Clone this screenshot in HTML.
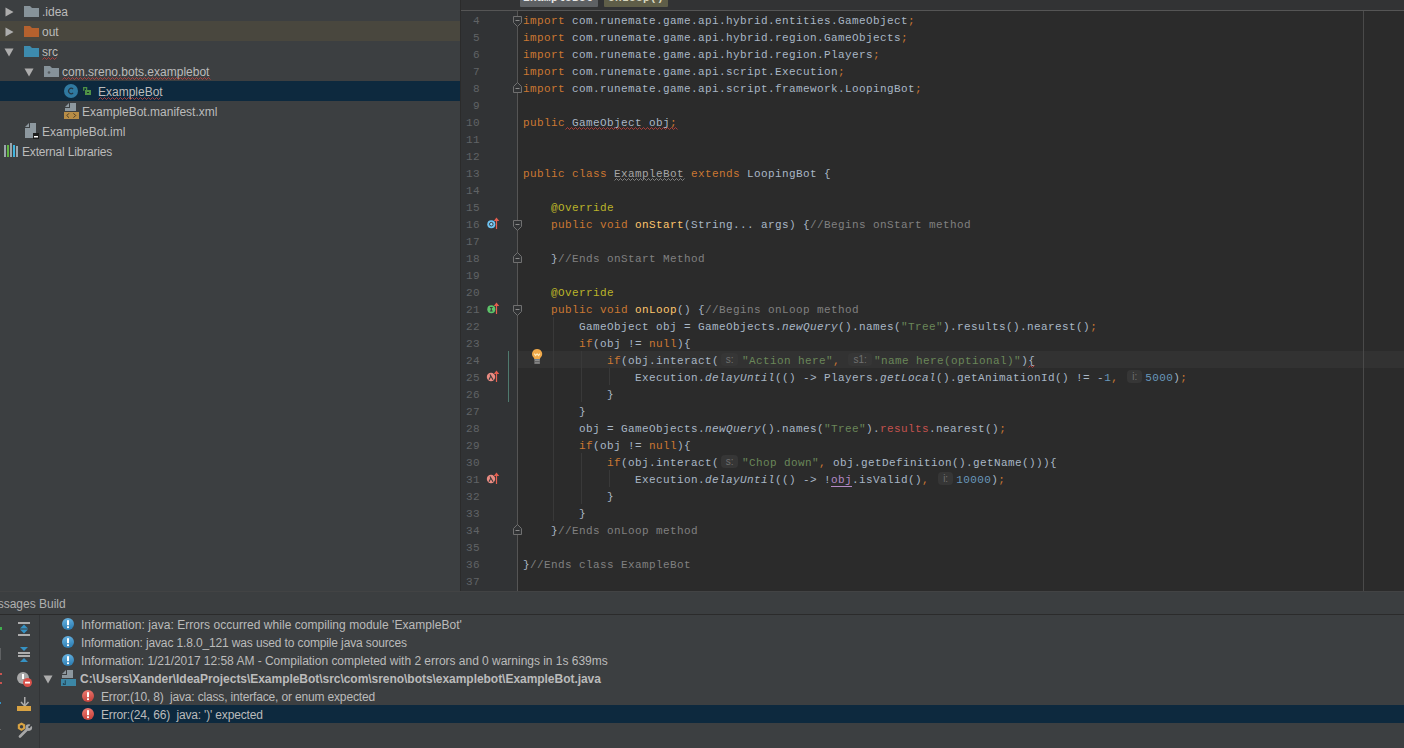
<!DOCTYPE html><html><head><meta charset="utf-8"><style>
*{margin:0;padding:0;box-sizing:border-box}
html,body{width:1404px;height:748px;overflow:hidden;background:#3C3F41;position:relative}
.abs{position:absolute}
#proj{left:0;top:0;width:460px;height:591px;background:#3C3F41}
#vsep{left:460px;top:0;width:1px;height:591px;background:#2B2B2B}
#crumb{left:461px;top:0;width:943px;height:10px;background:#323334}
#crumbline{left:461px;top:10px;width:943px;height:1px;background:#555555}
#gutter{left:461px;top:11px;width:56px;height:580px;background:#313335}
#gutline{left:517px;top:11px;width:1px;height:580px;background:#555555}
#code{left:518px;top:11px;width:886px;height:580px;background:#2B2B2B}
#margin{left:1363px;top:11px;width:1px;height:580px;background:#4A4A4A}
.tree{font-family:"Liberation Sans",sans-serif;font-size:12px;color:#BBBBBB;white-space:pre}
.row{position:absolute;left:0;width:460px;height:20px}
.ln{position:absolute;left:460px;width:20px;text-align:right;font-family:"Liberation Mono",monospace;font-size:11px;letter-spacing:0.4px;padding-top:2px;color:#606366;height:17px;line-height:17px;white-space:pre}
.cl{position:absolute;left:523px;height:17px;line-height:17px;font-family:"Liberation Mono",monospace;font-size:11px;letter-spacing:0.4px;color:#A9B7C6;padding-top:2px;white-space:pre}
.k{color:#CC7832}.s{color:#6A8759}.n{color:#6897BB}.a{color:#BBB529}.c{color:#808080}.f{color:#FFC66D}.i{font-style:italic}
.r{color:#C5524E}.u{color:#A6A6A6}.p{color:#B389C5;border-bottom:1px solid #B389C5}
.hint{display:inline-block;position:relative;vertical-align:top;height:17px}
.hb{position:absolute;top:0px;height:13px;background:#363636;border-radius:4px;font-family:"Liberation Sans",sans-serif;font-size:10px;line-height:13px;color:#707070;text-align:center;letter-spacing:0}
.msg{font-family:"Liberation Sans",sans-serif;font-size:12px;color:#BBBBBB;white-space:pre;position:absolute;height:18px;line-height:18px}

.tt{position:absolute;font-family:"Liberation Sans",sans-serif;font-size:12px;color:#BBBBBB;white-space:pre;height:20px;line-height:20px;padding-top:1px}

.mt{position:absolute;font-family:"Liberation Sans",sans-serif;font-size:12px;color:#BBBBBB;white-space:pre;height:18px;line-height:18px;padding-top:1px}
</style></head><body><div id="proj" class="abs"></div><div id="vsep" class="abs"></div><div id="crumb" class="abs"></div><div id="crumbline" class="abs"></div><div id="gutter" class="abs"></div><div id="gutline" class="abs"></div><div id="code" class="abs"></div><div id="margin" class="abs"></div><div class="abs" style="left:518px;top:351px;width:886px;height:17px;background:#323232"></div><div id="margin2" class="abs" style="left:1363px;top:351px;width:1px;height:17px;background:#4A4A4A"></div><div class="ln" style="top:11px">4</div><div class="ln" style="top:28px">5</div><div class="ln" style="top:45px">6</div><div class="ln" style="top:62px">7</div><div class="ln" style="top:79px">8</div><div class="ln" style="top:96px">9</div><div class="ln" style="top:113px">10</div><div class="ln" style="top:130px">11</div><div class="ln" style="top:147px">12</div><div class="ln" style="top:164px">13</div><div class="ln" style="top:181px">14</div><div class="ln" style="top:198px">15</div><div class="ln" style="top:215px">16</div><div class="ln" style="top:232px">17</div><div class="ln" style="top:249px">18</div><div class="ln" style="top:266px">19</div><div class="ln" style="top:283px">20</div><div class="ln" style="top:300px">21</div><div class="ln" style="top:317px">22</div><div class="ln" style="top:334px">23</div><div class="ln" style="top:351px">24</div><div class="ln" style="top:368px">25</div><div class="ln" style="top:385px">26</div><div class="ln" style="top:402px">27</div><div class="ln" style="top:419px">28</div><div class="ln" style="top:436px">29</div><div class="ln" style="top:453px">30</div><div class="ln" style="top:470px">31</div><div class="ln" style="top:487px">32</div><div class="ln" style="top:504px">33</div><div class="ln" style="top:521px">34</div><div class="ln" style="top:538px">35</div><div class="ln" style="top:555px">36</div><div class="ln" style="top:572px">37</div><div class="cl" style="top:11px"><span class="k">import</span> com.runemate.game.api.hybrid.entities.GameObject<span class="k">;</span></div><div class="cl" style="top:28px"><span class="k">import</span> com.runemate.game.api.hybrid.region.GameObjects<span class="k">;</span></div><div class="cl" style="top:45px"><span class="k">import</span> com.runemate.game.api.hybrid.region.Players<span class="k">;</span></div><div class="cl" style="top:62px"><span class="k">import</span> com.runemate.game.api.script.Execution<span class="k">;</span></div><div class="cl" style="top:79px"><span class="k">import</span> com.runemate.game.api.script.framework.LoopingBot<span class="k">;</span></div><div class="cl" style="top:113px"><span class="k">public</span> GameObject obj<span class="k">;</span></div><div class="cl" style="top:164px"><span class="k">public class </span><span class="u">ExampleBot</span> <span class="k">extends </span>LoopingBot {</div><div class="cl" style="top:198px">    <span class="a">@Override</span></div><div class="cl" style="top:215px">    <span class="k">public void </span><span class="f">onStart</span>(String... args) {<span class="c">//Begins onStart method</span></div><div class="cl" style="top:249px">    }<span class="c">//Ends onStart Method</span></div><div class="cl" style="top:283px">    <span class="a">@Override</span></div><div class="cl" style="top:300px">    <span class="k">public void </span><span class="f">onLoop</span>() {<span class="c">//Begins onLoop method</span></div><div class="cl" style="top:317px">        GameObject obj = GameObjects.<span class="i">newQuery</span>().names(<span class="s">&quot;Tree&quot;</span>).results().nearest()<span class="k">;</span></div><div class="cl" style="top:334px">        <span class="k">if</span>(obj != <span class="k">null</span>){</div><div class="cl" style="top:351px">            <span class="k">if</span>(obj.interact(<span class="hint" style="width:23px"><span class="hb" style="left:2px;width:17px">s:</span></span><span class="s">&quot;Action here&quot;</span><span class="k">,</span> <span class="hint" style="width:27px"><span class="hb" style="left:1px;width:24px">s1:</span></span><span class="s">&quot;name here(optional)&quot;</span>){</div><div class="cl" style="top:368px">                Execution.<span class="i">delayUntil</span>(() -&gt; Players.<span class="i">getLocal</span>().getAnimationId() != -<span class="n">1</span><span class="k">,</span> <span class="hint" style="width:20px"><span class="hb" style="left:2px;width:15px">i:</span></span><span class="n">5000</span>)<span class="k">;</span></div><div class="cl" style="top:385px">            }</div><div class="cl" style="top:402px">        }</div><div class="cl" style="top:419px">        obj = GameObjects.<span class="i">newQuery</span>().names(<span class="s">&quot;Tree&quot;</span>).<span class="r">results</span>.nearest()<span class="k">;</span></div><div class="cl" style="top:436px">        <span class="k">if</span>(obj != <span class="k">null</span>){</div><div class="cl" style="top:453px">            <span class="k">if</span>(obj.interact(<span class="hint" style="width:23px"><span class="hb" style="left:2px;width:17px">s:</span></span><span class="s">&quot;Chop down&quot;</span><span class="k">,</span> obj.getDefinition().getName())){</div><div class="cl" style="top:470px">                Execution.<span class="i">delayUntil</span>(() -&gt; !<span class="p">obj</span>.isValid()<span class="k">,</span> <span class="hint" style="width:20px"><span class="hb" style="left:2px;width:15px">i:</span></span><span class="n">10000</span>)<span class="k">;</span></div><div class="cl" style="top:487px">            }</div><div class="cl" style="top:504px">        }</div><div class="cl" style="top:521px">    }<span class="c">//Ends onLoop method</span></div><div class="cl" style="top:555px">}<span class="c">//Ends class ExampleBot</span></div><svg class="abs" style="left:565px;top:127px" width="113" height="4"><polyline points="0.5,2.5 2.5,0.5 4.5,2.5 6.5,0.5 8.5,2.5 10.5,0.5 12.5,2.5 14.5,0.5 16.5,2.5 18.5,0.5 20.5,2.5 22.5,0.5 24.5,2.5 26.5,0.5 28.5,2.5 30.5,0.5 32.5,2.5 34.5,0.5 36.5,2.5 38.5,0.5 40.5,2.5 42.5,0.5 44.5,2.5 46.5,0.5 48.5,2.5 50.5,0.5 52.5,2.5 54.5,0.5 56.5,2.5 58.5,0.5 60.5,2.5 62.5,0.5 64.5,2.5 66.5,0.5 68.5,2.5 70.5,0.5 72.5,2.5 74.5,0.5 76.5,2.5 78.5,0.5 80.5,2.5 82.5,0.5 84.5,2.5 86.5,0.5 88.5,2.5 90.5,0.5 92.5,2.5 94.5,0.5 96.5,2.5 98.5,0.5 100.5,2.5 102.5,0.5 104.5,2.5 106.5,0.5 108.5,2.5 110.5,0.5 112.5,2.5" fill="none" stroke="#BC3F3C" stroke-width="0.9"/></svg><svg class="abs" style="left:614px;top:178px" width="71" height="4"><polyline points="0.5,2.5 2.5,0.5 4.5,2.5 6.5,0.5 8.5,2.5 10.5,0.5 12.5,2.5 14.5,0.5 16.5,2.5 18.5,0.5 20.5,2.5 22.5,0.5 24.5,2.5 26.5,0.5 28.5,2.5 30.5,0.5 32.5,2.5 34.5,0.5 36.5,2.5 38.5,0.5 40.5,2.5 42.5,0.5 44.5,2.5 46.5,0.5 48.5,2.5 50.5,0.5 52.5,2.5 54.5,0.5 56.5,2.5 58.5,0.5 60.5,2.5 62.5,0.5 64.5,2.5 66.5,0.5 68.5,2.5 70.5,0.5" fill="none" stroke="#8A8A8A" stroke-width="0.9"/></svg><svg class="abs" style="left:1028px;top:365px" width="8" height="4"><polyline points="0.5,2.5 2.5,0.5 4.5,2.5 6.5,0.5" fill="none" stroke="#BC3F3C" stroke-width="0.9"/></svg><svg class="abs" style="left:512px;top:16px" width="11" height="12"><path d="M1.5 0.5 H9.5 V6.5 L5.5 10.5 L1.5 6.5Z" fill="#313335" stroke="#707070" stroke-width="1"/><rect x="3.5" y="4" width="4" height="1" fill="#8A8A8A"/></svg><svg class="abs" style="left:512px;top:220px" width="11" height="12"><path d="M1.5 0.5 H9.5 V6.5 L5.5 10.5 L1.5 6.5Z" fill="#313335" stroke="#707070" stroke-width="1"/><rect x="3.5" y="4" width="4" height="1" fill="#8A8A8A"/></svg><svg class="abs" style="left:512px;top:305px" width="11" height="12"><path d="M1.5 0.5 H9.5 V6.5 L5.5 10.5 L1.5 6.5Z" fill="#313335" stroke="#707070" stroke-width="1"/><rect x="3.5" y="4" width="4" height="1" fill="#8A8A8A"/></svg><svg class="abs" style="left:512px;top:82px" width="11" height="12"><path d="M1.5 10.5 H9.5 V4.5 L5.5 0.5 L1.5 4.5Z" fill="#313335" stroke="#707070" stroke-width="1"/><rect x="3.5" y="6" width="4" height="1" fill="#8A8A8A"/></svg><svg class="abs" style="left:512px;top:252px" width="11" height="12"><path d="M1.5 10.5 H9.5 V4.5 L5.5 0.5 L1.5 4.5Z" fill="#313335" stroke="#707070" stroke-width="1"/><rect x="3.5" y="6" width="4" height="1" fill="#8A8A8A"/></svg><svg class="abs" style="left:512px;top:524px" width="11" height="12"><path d="M1.5 10.5 H9.5 V4.5 L5.5 0.5 L1.5 4.5Z" fill="#313335" stroke="#707070" stroke-width="1"/><rect x="3.5" y="6" width="4" height="1" fill="#8A8A8A"/></svg><svg class="abs" style="left:487px;top:220px" width="9" height="9"><circle cx="4.3" cy="4.2" r="4" fill="#6DC3F2"/><circle cx="4.3" cy="4.2" r="1.8" fill="#8FD6FF" stroke="#3A3A3A" stroke-width="1"/></svg><svg class="abs" style="left:493px;top:217px" width="7" height="12"><path d="M3.5 12 V2.5" stroke="#E65F4F" stroke-width="1.2"/><path d="M0.8 4 L3.5 0.6 L6.2 4Z" fill="#E65F4F"/></svg><svg class="abs" style="left:487px;top:305px" width="9" height="9"><circle cx="4.3" cy="4.2" r="4" fill="#5DC46A"/><path d="M2.9 2.5 H5.7 M4.3 2.5 V6 M2.9 6 H5.7" stroke="#3A3A3A" stroke-width="1.1"/></svg><svg class="abs" style="left:493px;top:302px" width="7" height="12"><path d="M3.5 12 V2.5" stroke="#E65F4F" stroke-width="1.2"/><path d="M0.8 4 L3.5 0.6 L6.2 4Z" fill="#E65F4F"/></svg><svg class="abs" style="left:486px;top:372px" width="10" height="10"><circle cx="5" cy="5" r="4.2" fill="#E98B82"/><path d="M3 7.8 L5 3.8 M4 2.6 L7 7.8" stroke="#3A3A3A" stroke-width="1.1"/></svg><svg class="abs" style="left:493px;top:370px" width="7" height="12"><path d="M3.5 12 V2.5" stroke="#E65F4F" stroke-width="1.2"/><path d="M0.8 4 L3.5 0.6 L6.2 4Z" fill="#E65F4F"/></svg><svg class="abs" style="left:486px;top:474px" width="10" height="10"><circle cx="5" cy="5" r="4.2" fill="#E98B82"/><path d="M3 7.8 L5 3.8 M4 2.6 L7 7.8" stroke="#3A3A3A" stroke-width="1.1"/></svg><svg class="abs" style="left:493px;top:472px" width="7" height="12"><path d="M3.5 12 V2.5" stroke="#E65F4F" stroke-width="1.2"/><path d="M0.8 4 L3.5 0.6 L6.2 4Z" fill="#E65F4F"/></svg><div class="abs" style="left:508px;top:351px;width:1px;height:51px;background:#4F7A6E"></div><svg class="abs" style="left:532px;top:349px" width="11" height="16"><path d="M5.1 0 A5 5 0 0 1 8.6 8.6 L7.8 10 H2.4 L1.6 8.6 A5 5 0 0 1 5.1 0Z" fill="#F0A94A"/><path d="M2.3 4.6 L3.6 6.6 L5.1 4.8 L6.6 6.6 L7.9 4.6" stroke="#FFE9B8" stroke-width="1.1" fill="none"/><rect x="2.5" y="10" width="5.3" height="5" fill="#8E8E8E"/><rect x="2.5" y="10" width="5.3" height="0.9" fill="#6E7F90"/><rect x="2.5" y="12" width="5.3" height="0.8" fill="#5A5A5A"/><rect x="2.5" y="13.8" width="5.3" height="0.6" fill="#5A5A5A"/></svg><div class="abs" style="left:553px;top:317px;width:1px;height:204px;background:#393939"></div><div class="abs" style="left:581px;top:351px;width:1px;height:51px;background:#393939"></div><div class="abs" style="left:581px;top:453px;width:1px;height:51px;background:#393939"></div><div class="abs" style="left:609px;top:368px;width:1px;height:17px;background:#393939"></div><div class="abs" style="left:609px;top:470px;width:1px;height:17px;background:#393939"></div><div class="abs" style="left:520px;top:-10px;width:78px;height:17px;background:#5E6164;border-radius:1px"></div><div class="abs" style="left:604px;top:-10px;width:64px;height:17px;background:#5F5E48;border-radius:1px"></div><div class="abs" style="left:523px;top:-12.5px;padding-top:2px;height:17px;font-family:'Liberation Mono',monospace;font-size:11px;font-weight:bold;color:#E8E8E8;line-height:17px;letter-spacing:0.4px">ExampleBot</div><div class="abs" style="left:608px;top:-12.5px;padding-top:2px;height:17px;font-family:'Liberation Mono',monospace;font-size:11px;font-weight:bold;color:#D8D8C0;line-height:17px;letter-spacing:0.4px">onLoop()</div><div class="abs" style="left:0;top:21px;width:460px;height:20px;background:#49473E"></div><div class="abs" style="left:0;top:81px;width:460px;height:20px;background:#0D293E"></div><svg class="abs" style="left:5px;top:7px" width="9" height="10"><path d="M0.5 0.5 L8.5 5 L0.5 9.5Z" fill="#ADADAD"/></svg><svg class="abs" style="left:24px;top:6px" width="15" height="11"><path d="M0 0 H6 L8 2 H15 V11 H0Z" fill="#87939A"/></svg><div class="tt" style="left:42px;top:1px">.idea</div><svg class="abs" style="left:5px;top:27px" width="9" height="10"><path d="M0.5 0.5 L8.5 5 L0.5 9.5Z" fill="#ADADAD"/></svg><svg class="abs" style="left:24px;top:26px" width="15" height="11"><path d="M0 0 H6 L8 2 H15 V11 H0Z" fill="#B4612E"/></svg><div class="tt" style="left:42px;top:21px">out</div><svg class="abs" style="left:4px;top:48px" width="10" height="9"><path d="M0.5 0.5 L9.5 0.5 L5 8.5Z" fill="#ADADAD"/></svg><svg class="abs" style="left:24px;top:46px" width="15" height="11"><path d="M0 0 H6 L8 2 H15 V11 H0Z" fill="#3D8BAE"/></svg><div class="tt" style="left:42px;top:41px">src</div><svg class="abs" style="left:42px;top:57px" width="16" height="4"><polyline points="0.5,2.5 2.5,0.5 4.5,2.5 6.5,0.5 8.5,2.5 10.5,0.5 12.5,2.5 14.5,0.5" fill="none" stroke="#BC3F3C" stroke-width="0.9"/></svg><svg class="abs" style="left:24px;top:68px" width="10" height="9"><path d="M0.5 0.5 L9.5 0.5 L5 8.5Z" fill="#ADADAD"/></svg><svg class="abs" style="left:44px;top:66px" width="15" height="11"><path d="M0 0 H6 L8 2 H15 V11 H0Z" fill="#86929A"/><circle cx="5" cy="6.5" r="1.3" fill="#555B5F"/></svg><div class="tt" style="left:62px;top:61px">com.sreno.bots.examplebot</div><svg class="abs" style="left:62px;top:77px" width="149" height="4"><polyline points="0.5,2.5 2.5,0.5 4.5,2.5 6.5,0.5 8.5,2.5 10.5,0.5 12.5,2.5 14.5,0.5 16.5,2.5 18.5,0.5 20.5,2.5 22.5,0.5 24.5,2.5 26.5,0.5 28.5,2.5 30.5,0.5 32.5,2.5 34.5,0.5 36.5,2.5 38.5,0.5 40.5,2.5 42.5,0.5 44.5,2.5 46.5,0.5 48.5,2.5 50.5,0.5 52.5,2.5 54.5,0.5 56.5,2.5 58.5,0.5 60.5,2.5 62.5,0.5 64.5,2.5 66.5,0.5 68.5,2.5 70.5,0.5 72.5,2.5 74.5,0.5 76.5,2.5 78.5,0.5 80.5,2.5 82.5,0.5 84.5,2.5 86.5,0.5 88.5,2.5 90.5,0.5 92.5,2.5 94.5,0.5 96.5,2.5 98.5,0.5 100.5,2.5 102.5,0.5 104.5,2.5 106.5,0.5 108.5,2.5 110.5,0.5 112.5,2.5 114.5,0.5 116.5,2.5 118.5,0.5 120.5,2.5 122.5,0.5 124.5,2.5 126.5,0.5 128.5,2.5 130.5,0.5 132.5,2.5 134.5,0.5 136.5,2.5 138.5,0.5 140.5,2.5 142.5,0.5 144.5,2.5 146.5,0.5 148.5,2.5" fill="none" stroke="#BC3F3C" stroke-width="0.9"/></svg><svg class="abs" style="left:64px;top:84px" width="14" height="14"><circle cx="7" cy="7" r="7" fill="#3079A0"/><path d="M9.1 5 A2.7 2.7 0 1 0 9.1 9" stroke="#263440" stroke-width="1.2" fill="none"/></svg><svg class="abs" style="left:83px;top:87px" width="9" height="9"><path d="M0.7 3.8 V0.7 H3.6 V3" stroke="#4E9246" stroke-width="1.3" fill="none"/><rect x="2" y="3" width="6" height="5" fill="#4E9246"/><rect x="4" y="5" width="2" height="1" fill="#1E3030"/></svg><div class="tt" style="left:98px;top:81px;color:#BBBBBB">ExampleBot</div><svg class="abs" style="left:98px;top:97px" width="64" height="4"><polyline points="0.5,2.5 2.5,0.5 4.5,2.5 6.5,0.5 8.5,2.5 10.5,0.5 12.5,2.5 14.5,0.5 16.5,2.5 18.5,0.5 20.5,2.5 22.5,0.5 24.5,2.5 26.5,0.5 28.5,2.5 30.5,0.5 32.5,2.5 34.5,0.5 36.5,2.5 38.5,0.5 40.5,2.5 42.5,0.5 44.5,2.5 46.5,0.5 48.5,2.5 50.5,0.5 52.5,2.5 54.5,0.5 56.5,2.5 58.5,0.5 60.5,2.5 62.5,0.5" fill="none" stroke="#BC3F3C" stroke-width="0.9"/></svg><svg class="abs" style="left:64px;top:103px" width="16" height="17"><path d="M1 5 H6 V0 H12 V8 H1Z" fill="#8D989F"/><path d="M1 4 L5 0 V4Z" fill="#8D989F"/><rect x="0" y="9" width="15" height="7" fill="#B88D46"/><path d="M5 10.3 L2.8 12.5 L5 14.7 M9.5 10.3 L11.7 12.5 L9.5 14.7" stroke="#4A3C25" stroke-width="1" fill="none"/></svg><div class="tt" style="left:82px;top:101px">ExampleBot.manifest.xml</div><svg class="abs" style="left:25px;top:123px" width="15" height="17"><path d="M0 5 H5 V0 H11 V15 H0Z" fill="#8D989F"/><path d="M0 4 L4 0 V4Z" fill="#8D989F"/><rect x="8" y="10" width="6" height="6" fill="#1E1E1E"/><rect x="9" y="13" width="4" height="1.5" fill="#FFFFFF"/></svg><div class="tt" style="left:42px;top:121px">ExampleBot.iml</div><svg class="abs" style="left:4px;top:143px" width="15" height="15"><rect x="0" y="2" width="2" height="12" fill="#9AA5AC"/><rect x="3" y="2" width="2" height="12" fill="#62B543"/><rect x="6" y="0" width="2" height="14" fill="#9AA5AC"/><rect x="9" y="2" width="2" height="12" fill="#40B6E0"/><rect x="12" y="3" width="2" height="11" fill="#9AA5AC"/></svg><div class="tt" style="left:22px;top:141px;letter-spacing:-0.18px">External Libraries</div><div class="abs" style="left:0;top:591px;width:1404px;height:23px;background:#3B3E40"></div><div class="abs" style="left:0;top:591px;width:1404px;height:1px;background:#424344"></div><div class="abs" style="left:0;top:614px;width:1404px;height:1px;background:#2B2B2B"></div><div class="abs" style="left:39px;top:615px;width:1px;height:133px;background:#333537"></div><div class="mt" style="left:-19px;top:593px;height:20px;line-height:20px;color:#B0B0B0">Messages Build</div><div class="abs" style="left:40px;top:705px;width:1364px;height:18px;background:#0D293E"></div><svg width="0" height="0" style="position:absolute"><defs><linearGradient id="gi" x1="0" y1="0" x2="0.3" y2="1"><stop offset="0" stop-color="#6DB8E6"/><stop offset="1" stop-color="#2F80B5"/></linearGradient><linearGradient id="ge" x1="0" y1="0" x2="0.3" y2="1"><stop offset="0" stop-color="#F07F76"/><stop offset="1" stop-color="#C9453E"/></linearGradient></defs></svg><svg class="abs" style="left:62px;top:618px" width="12" height="12"><circle cx="6" cy="6" r="6" fill="url(#gi)"/><rect x="5" y="2.2" width="2" height="5" fill="#FFFFFF"/><rect x="5" y="8.3" width="2" height="1.8" fill="#FFFFFF"/></svg><div class="mt" style="left:81px;top:615px;letter-spacing:0.04px">Information: java: Errors occurred while compiling module 'ExampleBot'</div><svg class="abs" style="left:62px;top:636px" width="12" height="12"><circle cx="6" cy="6" r="6" fill="url(#gi)"/><rect x="5" y="2.2" width="2" height="5" fill="#FFFFFF"/><rect x="5" y="8.3" width="2" height="1.8" fill="#FFFFFF"/></svg><div class="mt" style="left:81px;top:633px;letter-spacing:-0.137px">Information: javac 1.8.0_121 was used to compile java sources</div><svg class="abs" style="left:62px;top:654px" width="12" height="12"><circle cx="6" cy="6" r="6" fill="url(#gi)"/><rect x="5" y="2.2" width="2" height="5" fill="#FFFFFF"/><rect x="5" y="8.3" width="2" height="1.8" fill="#FFFFFF"/></svg><div class="mt" style="left:81px;top:651px;letter-spacing:-0.024px">Information: 1/21/2017 12:58 AM - Compilation completed with 2 errors and 0 warnings in 1s 639ms</div><svg class="abs" style="left:42.5px;top:675px" width="10" height="9"><path d="M0.5 0.5 L9.5 0.5 L5 8.5Z" fill="#ADADAD"/></svg><svg class="abs" style="left:61px;top:670px" width="15" height="17"><path d="M1 5 H6 V0 H12 V8 H1Z" fill="#8D989F"/><path d="M1 4 L5 0 V4Z" fill="#8D989F"/><rect x="0" y="9" width="15" height="7" fill="#3C87A6"/><path d="M4.3 10.3 V14.4 H2.4 V13" stroke="#254A5C" stroke-width="1.1" fill="none"/></svg><div class="mt" style="left:80px;top:669px;font-weight:bold;letter-spacing:-0.039px">C:\Users\Xander\IdeaProjects\ExampleBot\src\com\sreno\bots\examplebot\ExampleBot.java</div><svg class="abs" style="left:82px;top:690px" width="12" height="12"><circle cx="6" cy="6" r="6" fill="url(#ge)"/><rect x="5" y="2.2" width="2" height="5" fill="#FFFFFF"/><rect x="5" y="8.3" width="2" height="1.8" fill="#FFFFFF"/></svg><div class="mt" style="left:101px;top:687px;letter-spacing:-0.161px">Error:(10, 8)  java: class, interface, or enum expected</div><svg class="abs" style="left:82px;top:708px" width="12" height="12"><circle cx="6" cy="6" r="6" fill="url(#ge)"/><rect x="5" y="2.2" width="2" height="5" fill="#FFFFFF"/><rect x="5" y="8.3" width="2" height="1.8" fill="#FFFFFF"/></svg><div class="mt" style="left:101px;top:705px;letter-spacing:-0.164px">Error:(24, 66)  java: ')' expected</div><svg class="abs" style="left:17px;top:621px" width="14" height="16">
<rect x="1" y="1" width="12" height="2" fill="#ADADAD"/><rect x="1" y="13" width="12" height="2" fill="#ADADAD"/>
<path d="M3 7.5 L7 3.5 L11 7.5Z" fill="#3592C4"/><path d="M3 8.5 L7 12.5 L11 8.5Z" fill="#3592C4"/></svg><svg class="abs" style="left:17px;top:646px" width="14" height="16">
<path d="M3 1 L7 5 L11 1Z" fill="#3592C4"/><rect x="1" y="6" width="12" height="2" fill="#ADADAD"/>
<rect x="1" y="9" width="12" height="2" fill="#ADADAD"/><path d="M3 16 L7 12 L11 16Z" fill="#3592C4"/></svg><svg class="abs" style="left:17px;top:672px" width="15" height="15">
<circle cx="6" cy="6" r="6" fill="#A8A8A8"/><rect x="5" y="2" width="2" height="5" fill="#FFFFFF"/>
<circle cx="10.5" cy="10.5" r="4.5" fill="#D9514A"/><rect x="8" y="9.7" width="5" height="1.8" fill="#FFFFFF"/></svg><svg class="abs" style="left:17px;top:697px" width="15" height="15">
<rect x="7" y="0" width="1.5" height="8" fill="#ADADAD"/><path d="M4 5 L7.75 9 L11.5 5" stroke="#ADADAD" stroke-width="1.5" fill="none"/>
<rect x="0" y="9" width="14" height="5" fill="#D9A343"/></svg><svg class="abs" style="left:17px;top:722px" width="16" height="16">
<path d="M4.5 0.5 L8.2 2.6 V6.8 L4.5 8.9 L0.8 6.8 V2.6Z" fill="#D9A343"/><circle cx="4.5" cy="4.7" r="1.7" fill="#3C3F41"/>
<path d="M3 14.5 L10 7.5" stroke="#A8A8A8" stroke-width="2.6" stroke-linecap="round"/>
<circle cx="11.8" cy="5.6" r="3.3" fill="#A8A8A8"/><path d="M11.5 5.8 L14 1.2 L16 3.5Z" fill="#3C3F41"/><circle cx="12.3" cy="5.1" r="1.1" fill="#3C3F41"/></svg><div class="abs" style="left:0;top:627px;width:2px;height:3px;background:#3FB04E"></div><div class="abs" style="left:0;top:648px;width:1px;height:12px;background:#5F6163"></div><div class="abs" style="left:0;top:673px;width:2px;height:2px;background:#C75450"></div><div class="abs" style="left:0;top:682px;width:2px;height:2px;background:#C75450"></div><div class="abs" style="left:0;top:702px;width:1px;height:2px;background:#3592C4"></div><div class="abs" style="left:0;top:729px;width:1px;height:1px;background:#6A6A6A"></div></body></html>
